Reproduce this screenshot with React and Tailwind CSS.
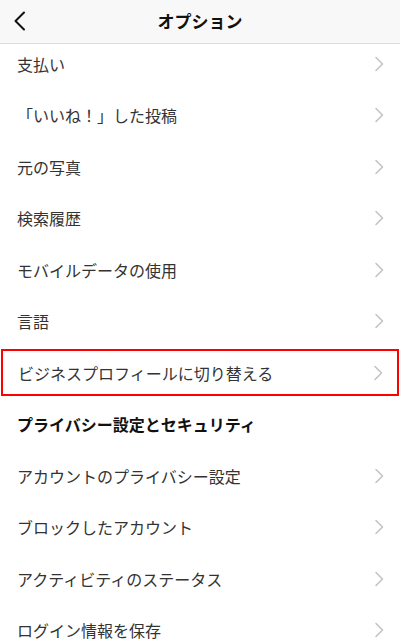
import React from "react";

const Chevron = () => (
  <svg width="10" height="16" viewBox="0 0 10 16" className="shrink-0">
    <path d="M2 1.5 L8.5 8 L2 14.5" fill="none" stroke="#c4c4c4" strokeWidth="1.6" strokeLinecap="round" strokeLinejoin="round" />
  </svg>
);

const Row = ({ label }) => (
  <div className="flex items-center justify-between pl-[17px] pr-[16px] h-[51.5px]">
    <span className="text-[16px] text-[#333333]">{label}</span>
    <Chevron />
  </div>
);

export default function App() {
  const font = { fontFamily: '"Noto Sans CJK JP", "Noto Sans", sans-serif' };
  return (
    <div className="w-[400px] h-[641px] overflow-hidden bg-white" style={font}>
      <div className="relative z-10 flex items-center justify-center h-[44px] bg-[#f8f8f8] border-b border-[#dcdcdc]">
        <svg width="14" height="20" viewBox="0 0 14 20" className="absolute left-[13px] top-[11px]">
          <path d="M11 1.5 L2.5 10 L11 18.5" fill="none" stroke="#111" strokeWidth="2" strokeLinecap="round" strokeLinejoin="round" />
        </svg>
        <span className="text-[17px] font-bold text-[#111] -mt-[2px]">オプション</span>
      </div>
      <div className="-mt-[6px]">
        <Row label="支払い" />
        <Row label="「いいね！」した投稿" />
        <Row label="元の写真" />
        <Row label="検索履歴" />
        <Row label="モバイルデータの使用" />
        <Row label="言語" />
        <div className="h-[51.5px] flex items-center px-[1px]">
          <div className="w-full h-[47px] border-2 border-[#ff0000] flex items-center justify-between pl-[15px] pr-[14px]">
            <span className="text-[16px] text-[#333333]">ビジネスプロフィールに切り替える</span>
            <Chevron />
          </div>
        </div>
        <div className="h-[51.5px] flex items-center pl-[17px]">
          <span className="text-[16px] font-bold text-[#111]">プライバシー設定とセキュリティ</span>
        </div>
        <Row label="アカウントのプライバシー設定" />
        <Row label="ブロックしたアカウント" />
        <Row label="アクティビティのステータス" />
        <Row label="ログイン情報を保存" />
      </div>
    </div>
  );
}
